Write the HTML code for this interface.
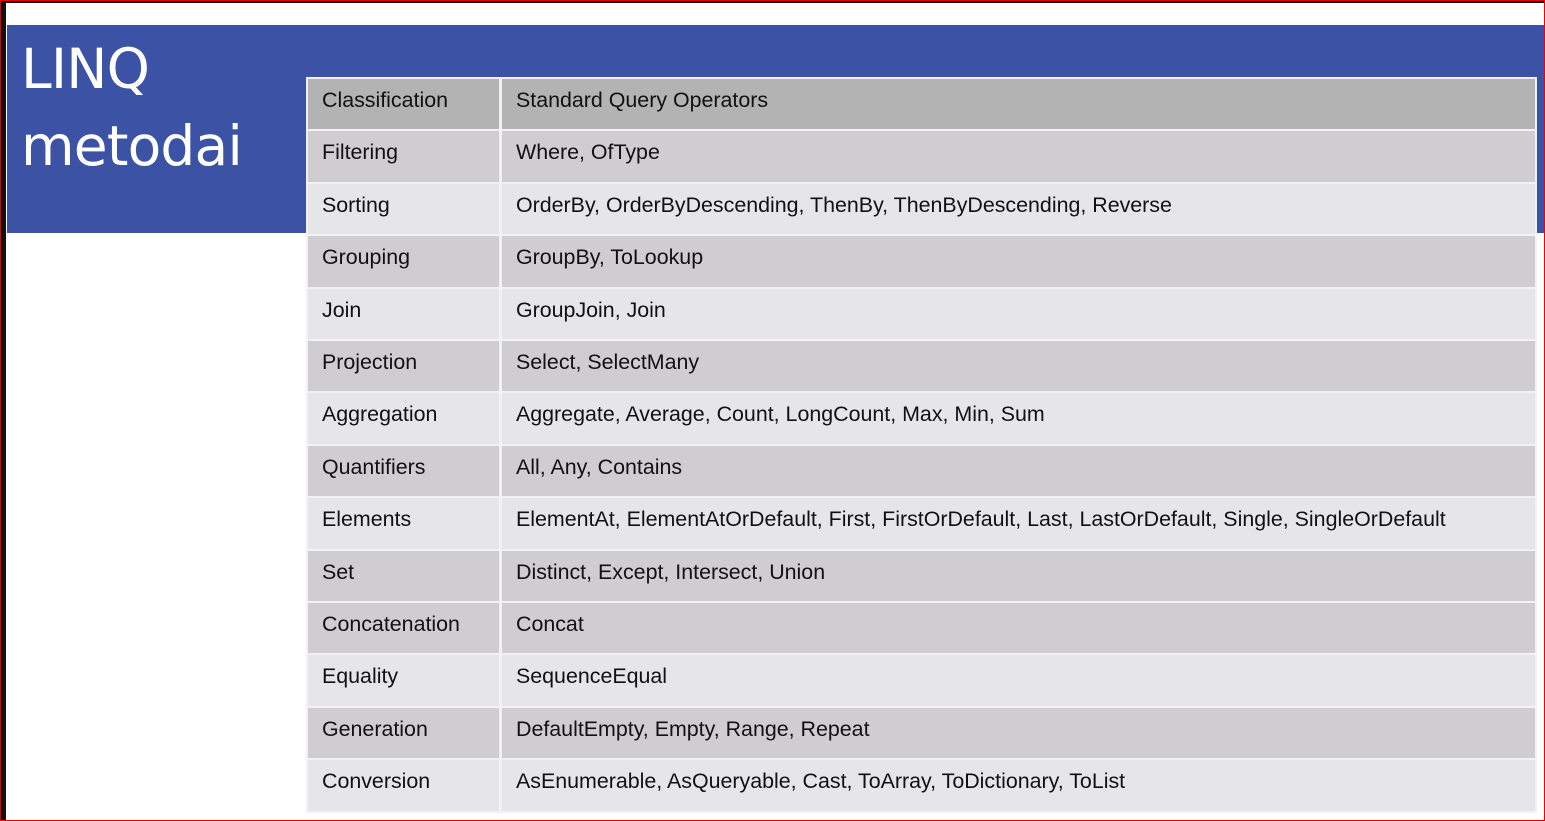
<!DOCTYPE html>
<html><head><style>
html,body{margin:0;padding:0;}
body{width:1545px;height:821px;position:relative;overflow:hidden;background:#fff;font-family:"Liberation Sans",Arial,sans-serif;}
.frame{position:absolute;left:0;top:0;width:1543px;height:819px;border:1px solid #e00;}
.topblack{position:absolute;left:1px;top:1px;width:1543px;height:2px;background:#111;}
.leftblack{position:absolute;left:1px;top:1px;width:5px;height:819px;background:#111;}
.band{position:absolute;left:7px;top:25px;width:1537px;height:208px;background:#3b52a5;}
.title{position:absolute;left:21px;top:31px;color:#fff;font-family:"DejaVu Sans","Liberation Sans",sans-serif;font-size:55px;line-height:77px;letter-spacing:-0.8px;}
.tbl{position:absolute;left:306px;top:77px;width:1231px;height:736px;background:#f2f2f4;}
.r{position:absolute;left:2px;width:1227px;height:50.4px;}
.c1,.c2{position:absolute;top:0;height:100%;font-size:21.4px;color:#111;line-height:42px;}
.c1{left:0;width:191px;padding-left:14px;box-sizing:border-box;}
.c2{left:194px;right:0;padding-left:14px;}
.h .c1,.h .c2{background:#b3b3b3;}
.o .c1,.o .c2{background:#cfcdcf;}
.e .c1,.e .c2{background:#e6e6e8;}
</style></head><body>
<div class="frame"></div>
<div class="topblack"></div>
<div class="leftblack"></div>
<div class="band"></div>
<div class="title">LINQ<br>metodai</div>
<div class="tbl">
<div class="r h" style="top:2px"><div class="c1">Classification</div><div class="c2">Standard Query Operators</div></div>
<div class="r o" style="top:54.4px"><div class="c1">Filtering</div><div class="c2">Where, OfType</div></div>
<div class="r e" style="top:106.8px"><div class="c1">Sorting</div><div class="c2">OrderBy, OrderByDescending, ThenBy, ThenByDescending, Reverse</div></div>
<div class="r o" style="top:159.2px"><div class="c1">Grouping</div><div class="c2">GroupBy, ToLookup</div></div>
<div class="r e" style="top:211.6px"><div class="c1">Join</div><div class="c2">GroupJoin, Join</div></div>
<div class="r o" style="top:264px"><div class="c1">Projection</div><div class="c2">Select, SelectMany</div></div>
<div class="r e" style="top:316.4px"><div class="c1">Aggregation</div><div class="c2">Aggregate, Average, Count, LongCount, Max, Min, Sum</div></div>
<div class="r o" style="top:368.8px"><div class="c1">Quantifiers</div><div class="c2">All, Any, Contains</div></div>
<div class="r e" style="top:421.2px"><div class="c1">Elements</div><div class="c2">ElementAt, ElementAtOrDefault, First, FirstOrDefault, Last, LastOrDefault, Single, SingleOrDefault</div></div>
<div class="r o" style="top:473.6px"><div class="c1">Set</div><div class="c2">Distinct, Except, Intersect, Union</div></div>
<div class="r o" style="top:526px"><div class="c1">Concatenation</div><div class="c2">Concat</div></div>
<div class="r e" style="top:578.4px"><div class="c1">Equality</div><div class="c2">SequenceEqual</div></div>
<div class="r o" style="top:630.8px"><div class="c1">Generation</div><div class="c2">DefaultEmpty, Empty, Range, Repeat</div></div>
<div class="r e" style="top:683.2px"><div class="c1">Conversion</div><div class="c2">AsEnumerable, AsQueryable, Cast, ToArray, ToDictionary, ToList</div></div>
</div>
</body></html>
